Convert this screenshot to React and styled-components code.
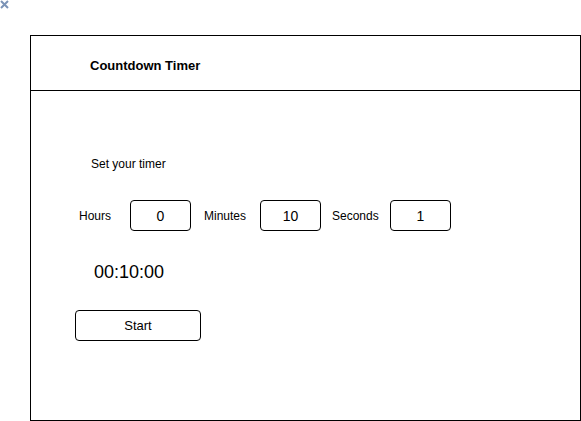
import { Fragment } from 'react';
import styled, { createGlobalStyle } from 'styled-components';

const GlobalStyle = createGlobalStyle`
  html, body {
    margin: 0;
    padding: 0;
    background: #ffffff;
    font-family: "Liberation Sans", Arial, sans-serif;
    color: #000000;
  }
  * { box-sizing: border-box; }
`;

const Page = styled.div`
  width: 581px;
  height: 421px;
  overflow: hidden;
`;

const CloseMark = styled.svg`
  display: block;
  width: 10px;
  height: 10px;
`;

const Window = styled.section`
  margin: 25px 0 0 30px;
  width: 551px;
  height: 386px;
  border: 1px solid #000000;
  display: flex;
  flex-direction: column;
`;

const Header = styled.header`
  height: 55px;
  border-bottom: 1px solid #000000;
  display: flex;
  align-items: center;
  padding: 4px 0 0 59px;
`;

const Title = styled.h1`
  margin: 0;
  font-size: 13px;
  font-weight: bold;
`;

const Body = styled.div`
  display: flex;
  flex-direction: column;
  align-items: flex-start;
  padding-top: 66px;
`;

const Prompt = styled.p`
  margin: 0 0 0 60px;
  font-size: 12px;
  line-height: 14px;
`;

const FieldRow = styled.div`
  margin: 29px 0 0 48px;
  display: flex;
  align-items: center;
  gap: 12px;
`;

const FieldLabel = styled.label`
  width: ${({ w }) => w}px;
  margin-left: ${({ shift }) => shift || 0}px;
  padding-left: ${({ pad }) => pad || 0}px;
  font-size: 12px;
  line-height: 14px;
`;

const NumberBox = styled.div`
  width: 61px;
  height: 31px;
  border: 1px solid #000000;
  border-radius: 4px;
  display: flex;
  align-items: center;
  justify-content: center;
  font-size: 14px;
`;

const Clock = styled.div`
  margin: 31px 0 0 63px;
  font-size: 18px;
  line-height: 21px;
`;

const StartButton = styled.button`
  margin: 27px 0 0 44px;
  width: 126px;
  height: 31px;
  border: 1px solid #000000;
  border-radius: 4px;
  background: #ffffff;
  font-family: "Liberation Sans", Arial, sans-serif;
  font-size: 13px;
  color: #000000;
  padding: 0;
`;

const fields = [
  { label: 'Hours', value: '0', w: 39 },
  { label: 'Minutes', value: '10', w: 45, pad: 1 },
  { label: 'Seconds', value: '1', w: 46, shift: -1 },
];

export default function App() {
  return (
    <Page>
      <GlobalStyle />
      <CloseMark viewBox="0 0 10 10">
        <path d="M1 1 L8 8 M8 1 L1 8" stroke="#7b93b6" strokeWidth="2" fill="none" />
      </CloseMark>
      <Window>
        <Header>
          <Title>Countdown Timer</Title>
        </Header>
        <Body>
          <Prompt>Set your timer</Prompt>
          <FieldRow>
            {fields.map((f) => (
              <Fragment key={f.label}>
                <FieldLabel w={f.w} pad={f.pad} shift={f.shift}>{f.label}</FieldLabel>
                <NumberBox>{f.value}</NumberBox>
              </Fragment>
            ))}
          </FieldRow>
          <Clock>00:10:00</Clock>
          <StartButton>Start</StartButton>
        </Body>
      </Window>
    </Page>
  );
}
